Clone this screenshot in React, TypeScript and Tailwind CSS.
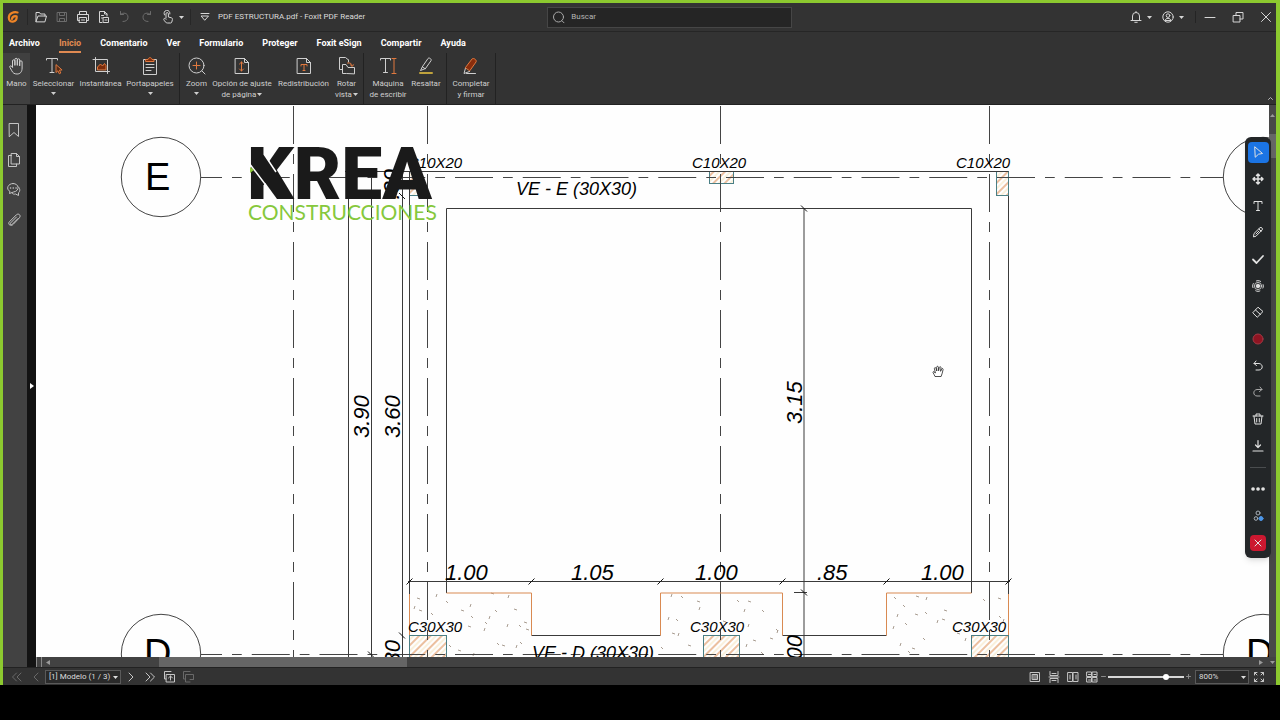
import { useState, type ReactNode } from "react";

const TABS = ["Archivo", "Inicio", "Comentario", "Ver", "Formulario", "Proteger", "Foxit eSign", "Compartir", "Ayuda"];

function Icon({ size, className, children }: { size: number; className?: string; children: ReactNode }) {
  return (
    <svg
      width={size}
      height={size}
      viewBox={`0 0 ${size} ${size}`}
      fill="none"
      stroke="currentColor"
      strokeLinecap="round"
      strokeLinejoin="round"
      className={`shrink-0 ${className ?? ""}`}
      aria-hidden="true"
    >
      {children}
    </svg>
  );
}

function Caret({ className }: { className?: string }) {
  return (
    <svg width="5" height="3" viewBox="0 0 5 3" fill="currentColor" className={`shrink-0 ${className ?? ""}`} aria-hidden="true">
      <path d="M0 0h5L2.5 3z" />
    </svg>
  );
}

/* ── Title bar ─────────────────────────────────────────────────── */
function TitleButton({ label, dim, width = "w-[21px]", children }: { label: string; dim?: boolean; width?: string; children: ReactNode }) {
  return (
    <button type="button" aria-label={label} className={`${width} h-5 flex items-center justify-center gap-1 ${dim ? "text-[#6c6c6c]" : "text-[#d6d6d6]"}`}>
      {children}
    </button>
  );
}

function TitleBar() {
  return (
    <header className="h-[29px] shrink-0 flex items-center bg-[#333333] border-b border-[#262626]">
      <div className="flex-[9] min-w-0 flex items-center">
        <Icon size={12} className="ml-1 text-[#ee8426]">
          <path d="M10.500 1.500C7 .600 1.800 2 1.800 6.800c0 2.700 2 4 4.200 3.800C8.800 10.400 10 8 9.600 5.300c-1.800-.3-4.200.2-4.600 2.500" strokeWidth="2.200" />
        </Icon>
        <div className="w-px h-4 bg-[#272727] ml-[8px] mr-[2px]" />
        <TitleButton label="Abrir">
          <Icon size={14}>
            <path d="M2 11.500V2.500h3.500l1 1.500H11v2M2 11.500L4 6h8.500L11 11.500z" />
          </Icon>
        </TitleButton>
        <TitleButton label="Guardar" dim>
          <Icon size={14}>
            <path d="M2.500 2.500h9v9h-9zM4.500 2.500v3h5v-3M4.500 11.500v-3h5v3" />
          </Icon>
        </TitleButton>
        <TitleButton label="Imprimir">
          <Icon size={14}>
            <path d="M3.500 4.500v-3h7v3M3.500 10.500h-2v-6h11v6h-2M3.500 7.500h7v5h-7zM5.500 10h3" />
          </Icon>
        </TitleButton>
        <TitleButton label="Exportar">
          <Icon size={14}>
            <path d="M5 12.500H2.500v-11h5L10 4v2M7.500 1.500V4H10M4.500 5.500h2M4.500 8h1M6.500 7.500h5v5h-5zM8 10h2" />
          </Icon>
        </TitleButton>
        <TitleButton label="Deshacer" dim>
          <Icon size={14}>
            <path d="M2.500 1.500v3h3M2.500 4.500C5 2 10 2.800 10 7.200 10 10 8 11.500 5 11.500" />
          </Icon>
        </TitleButton>
        <TitleButton label="Rehacer" dim>
          <Icon size={14}>
            <path d="M11.500 1.500v3h-3M11.500 4.500C9 2 4 2.800 4 7.200c0 2.800 2 4.300 5 4.300" />
          </Icon>
        </TitleButton>
        <TitleButton label="Modo táctil" width="w-[32px]">
          <Icon size={14}>
            <path d="M5 8V3.800a1.200 1.200 0 0 1 2.400 0V7l3 .8c1 .3 1.200 1 1 1.800l-.6 2.400c-.2.600-.6 1-1.200 1H6.500c-1.800 0-3-2-3.700-3.400-.4-1 .8-1.600 1.600-.9l.6.6M3.500 5a3 3 0 1 1 5.400-1" />
          </Icon>
          <Caret />
        </TitleButton>
        <div className="w-px h-4 bg-[#272727] ml-[2px] mr-[3px]" />
        <TitleButton label="Personalizar barra">
          <Icon size={14}>
            <path d="M3 3.500h8M3.500 6h7L7 10z" />
          </Icon>
        </TitleButton>
        <h1 className="ml-[3px] text-[8px] text-[#dcdcdc] whitespace-nowrap">PDF ESTRUCTURA.pdf - Foxit PDF Reader</h1>
      </div>
      <div className="w-[245px] h-[21px] flex items-center gap-[6px] px-1 bg-[#252525] border border-[#464646] text-[#a8a8a8]">
        <Icon size={13}>
          <circle cx="6.500" cy="6" r="5" />
          <path d="M10 9.800l2 2" />
        </Icon>
        <input type="search" aria-label="Buscar" placeholder="Buscar" className="flex-1 min-w-0 bg-transparent text-[8px] outline-none placeholder:text-[#b4b4b4]" />
      </div>
      <div className="flex-[8] flex items-center justify-end">
        <TitleButton label="Notificaciones" width="w-[32px]">
          <Icon size={14}>
            <path d="M2 10.500h10M3.500 10.500V6a3.500 3.500 0 0 1 7 0v4.500M5.800 12.300h2.400M7 1.500v1" />
          </Icon>
          <Caret />
        </TitleButton>
        <TitleButton label="Cuenta" width="w-[32px]">
          <Icon size={14}>
            <circle cx="7" cy="7" r="5.200" />
            <circle cx="7" cy="5.600" r="1.800" />
            <path d="M4 10.500c.3-3 5.700-3 6 0M4.500 10.500h5" />
          </Icon>
          <Caret />
        </TitleButton>
        <div className="w-px h-3 bg-[#242424] ml-[7px] mr-1" />
        <TitleButton label="Minimizar" width="w-5">
          <Icon size={12}>
            <path d="M1 6.500h10" />
          </Icon>
        </TitleButton>
        <TitleButton label="Restaurar" width="w-9">
          <Icon size={12}>
            <path d="M1.500 4.500h6.500v6.500h-6.500zM4 4.500v-3h7V8H8" />
          </Icon>
        </TitleButton>
        <TitleButton label="Cerrar" width="w-5">
          <Icon size={12}>
            <path d="M1.500 1.500l9 9M10.500 1.500l-9 9" />
          </Icon>
        </TitleButton>
      </div>
    </header>
  );
}

/* ── Ribbon ────────────────────────────────────────────────────── */
const ORANGE = "#e0793f";

function Tool({ lines, width, caret, active, children }: { lines: string[]; width: string; caret?: boolean; active?: boolean; children: ReactNode }) {
  return (
    <button type="button" className={`${width} h-full shrink-0 flex flex-col items-center pt-[3px] text-[#cfcfcf] text-[8px] leading-[11px] whitespace-nowrap ${active ? "bg-[#404040]" : ""}`}>
      <Icon size={20} className="mb-[2px]">{children}</Icon>
      {lines.map((line, i) => (
        <span key={line} className="flex items-center gap-px">
          {line}
          {caret && i > 0 && <Caret />}
        </span>
      ))}
      {caret && lines.length === 1 && <Caret className="mt-[3px]" />}
    </button>
  );
}

function ToolDivider() {
  return <div className="w-px h-full shrink-0 bg-[#222222] mx-[3px]" />;
}

function Ribbon() {
  return (
    <div className="h-[51px] shrink-0 flex bg-[#333333]">
      <Tool lines={["Mano"]} width="w-[27px]" active>
        <path d="M5.500 11V5a1.200 1.200 0 0 1 2.400 0v4M7.900 9V3.500a1.200 1.200 0 0 1 2.400 0V9M10.300 9V4a1.200 1.200 0 0 1 2.400 0v5.500M12.700 9.500V6a1.200 1.200 0 0 1 2.400 0v6c0 4-2 6-5 6-2.800 0-4.200-1-5.300-3.200L2.900 11.400c-.7-1.300.8-2 1.600-1.200l1 1.200" />
      </Tool>
      <Tool lines={["Seleccionar"]} width="w-[47px]" caret>
        <path d="M2.500 4V2.500h11V4M8 2.500v14M6 16.500h4" />
        <path d="M12 9v7.500l1.900-1.700 1.400 3 1.500-.8-1.400-2.800 2.300-.2z" stroke={ORANGE} fill="#5a2c14" />
      </Tool>
      <Tool lines={["Instantánea"]} width="w-[47px]">
        <path d="M4.500 1.500v14h14M2 3.500h14.500v14" />
        <path d="M6.500 13.500V11l3-3 2 2 2-2.500 1.500 2v4z" stroke={ORANGE} fill="#7c2d0c" />
      </Tool>
      <Tool lines={["Portapapeles"]} width="w-[52px]" caret>
        <path d="M6 3.500H3.500v15h13v-15H14M6 8.500h8M6 11.500h8M6 14.500h5" />
        <path d="M6 3.500h2c.5-2.500 3.500-2.500 4 0h2v2H6z" stroke={ORANGE} fill="#7c2d0c" />
      </Tool>
      <ToolDivider />
      <Tool lines={["Zoom"]} width="w-[27px]" caret>
        <circle cx="9.500" cy="9.500" r="7.500" />
        <path d="M15 15l3 3" />
        <path d="M9.500 6v7M6 9.500h7" stroke={ORANGE} />
      </Tool>
      <Tool lines={["Opción de ajuste", "de página"]} width="w-[64px]" caret>
        <path d="M3.500 2.500h9l4 4v11h-13zM12.500 2.500v4h4" />
        <path d="M9.500 6v9M7.500 8l2-2 2 2M7.500 13l2 2 2-2" stroke={ORANGE} />
      </Tool>
      <Tool lines={["Redistribución"]} width="w-[59px]">
        <path d="M3.500 2.500h9l4 4v11h-13zM12.500 2.500v4h4" />
        <path d="M7 10V8.500h6V10M10 8.500v6M9 14.500h2" stroke={ORANGE} />
      </Tool>
      <Tool lines={["Rotar", "vista"]} width="w-[27px]" caret>
        <path d="M5.500 13.500h-3v-12h6l3 2.500M9 17.500H5.500v-9H9l2 3h6.500v6zM11.500 4v2" />
        <path d="M10.500 7c3-.5 4.500.5 4.500 3M13.300 8.700L15 10.300l1.800-1.600" stroke={ORANGE} />
      </Tool>
      <ToolDivider />
      <Tool lines={["Máquina", "de escribir"]} width="w-[42px]">
        <path d="M2.500 4V2.500h10V4M7.500 2.500v14M5.500 16.500h4" />
        <path d="M14 2.500h4M16 2.500v15M14 17.500h4" stroke={ORANGE} />
      </Tool>
      <Tool lines={["Resaltar"]} width="w-[34px]">
        <path d="M6.500 10.500l5.500-8c1-1.300 4 .5 3 2.200l-5.500 7.800zM6.500 10.500L4.500 14.500l5-2" />
        <path d="M4 17h12" stroke="#bfa23c" strokeWidth="2" />
      </Tool>
      <ToolDivider />
      <Tool lines={["Completar", "y firmar"]} width="w-[42px]">
        <path d="M4.500 12L3 17.500l5.500-2M5.500 17.500h9" />
        <path d="M4.500 11.500L11 3c1.500-1.600 5.300 1.200 4 3L9 14.500z" stroke={ORANGE} fill="#8a2d0c" />
      </Tool>
      <ToolDivider />
      <button type="button" aria-label="Contraer cinta" className="ml-auto self-end mb-[2px] w-[9px] h-[8px] text-[#b5b5b5]">
        <Icon size={7}>
          <path d="M1.500 4.500l2-2 2 2" />
        </Icon>
      </button>
    </div>
  );
}

/* ── Side panel ────────────────────────────────────────────────── */
function SideBar() {
  return (
    <nav className="w-6 shrink-0 bg-[#424242] flex flex-col items-center gap-[14px] pt-[17px] pr-[2px] text-[#c4c4c4]">
      <button type="button" aria-label="Marcadores">
        <Icon size={16}>
          <path d="M3.500 1.500h9v13L8 10.500l-4.500 4z" />
        </Icon>
      </button>
      <button type="button" aria-label="Páginas">
        <Icon size={16}>
          <path d="M5.500 1.500h5l3 3v7.500h-8zM10.500 1.500v3h3M5.500 3.500h-3v11h8V12" />
        </Icon>
      </button>
      <button type="button" aria-label="Comentarios">
        <Icon size={16}>
          <path d="M7 1.500c6.500 0 7 7.500.5 8.500L3.500 11.500 4 9.500C-.5 7 2 1.500 7 1.500zM12.500 5c2 2 1.500 4.500 0 5.800v2.700l-3-1.500C8 12.500 6.500 12 6 11" />
          <path d="M4.500 6h.1M7.200 6h.1M10 6h.1" strokeWidth="1.500" />
        </Icon>
      </button>
      <button type="button" aria-label="Adjuntos">
        <Icon size={16}>
          <path d="M12 6.500l-6 6c-2 1.800-4.500-.6-2.600-2.700l7-7c2.300-2 5 .8 3 3L7 12.500c-1.300 1.500-3.500.5-2.500-1.500l6-6" />
        </Icon>
      </button>
    </nav>
  );
}

/* ── Structural plan ───────────────────────────────────────────── */
const AXES_X = [293.5, 427.5, 720.5, 989.5];
const AXES_Y = [177.5, 654.5];

const COLUMNS = [
  [409.5, 171.5, 12, 24],
  [709.5, 171.5, 24, 12],
  [996.5, 171.5, 12, 24],
  [409.5, 635.5, 37, 37],
  [703.5, 635.5, 36, 37],
  [971.5, 635.5, 37, 37],
];

const TICKS = [409.5, 531.5, 660.5, 782.5, 886.5, 1008.5];

const SPECKS = [
  [417, 598], [436, 597], [446, 601], [419, 610], [414, 609], [431, 613], [461, 610], [470, 607], [471, 616],
  [491, 593], [508, 598], [495, 610], [514, 609], [489, 619], [485, 622], [468, 626], [507, 627], [519, 625],
  [524, 622], [484, 631], [449, 645], [458, 650], [473, 656], [497, 643], [502, 645], [516, 648], [520, 642],
  [526, 629], [671, 597], [681, 596], [697, 601], [699, 610], [737, 600], [748, 601], [744, 612], [762, 610],
  [723, 621], [668, 620], [676, 619], [672, 633], [678, 636], [661, 647], [688, 645], [748, 627], [776, 629],
  [753, 640], [746, 647], [761, 652], [770, 638], [777, 633], [894, 597], [916, 596], [926, 600], [903, 605],
  [915, 614], [897, 617], [925, 612], [944, 610], [893, 629], [905, 623], [942, 619], [937, 623], [923, 638],
  [912, 648], [900, 646], [908, 651], [957, 633], [965, 641], [983, 599], [998, 598], [1003, 622], [999, 616],
];

function PlanDrawing() {
  return (
    <svg
      viewBox="36 105 1233 552"
      preserveAspectRatio="xMinYMin slice"
      className="absolute inset-0 w-full h-full font-['Liberation_Sans',sans-serif]"
      role="img"
      aria-label="Plano estructural"
    >
      <defs>
        <pattern id="hatch" width="8" height="8" patternUnits="userSpaceOnUse" patternTransform="rotate(45)">
          <path d="M2 0v8" stroke="#d9813f" strokeWidth="1" />
          <path d="M6 0v8" stroke="#f6e2b8" strokeWidth="1" />
        </pattern>
      </defs>

      {/* concrete speckles */}
      <g stroke="#a89c90" strokeWidth="1">
        {SPECKS.map(([x, y], i) => (
          <path key={i} d={i % 3 === 0 ? `M${x} ${y}l3 1` : i % 3 === 1 ? `M${x} ${y}l1-3` : `M${x} ${y}l2 2`} />
        ))}
      </g>

      {COLUMNS.map(([x, y, w, h]) => (
        <rect key={`${x}-${y}`} x={x} y={y} width={w} height={h} fill="url(#hatch)" stroke="#4a7f85" />
      ))}

      {/* axes */}
      <g stroke="#444444" fill="none">
        {AXES_X.map((x) => (
          <path key={x} d={`M${x} 106V657`} strokeDasharray="38 10 10 10" />
        ))}
        {AXES_Y.map((y) => (
          <path key={y} d={`M201 ${y}H1223`} strokeDasharray="38 10 9.750 10" strokeDashoffset="17" />
        ))}
        <circle cx="161" cy="177" r="39.700" />
        <circle cx="1263" cy="177" r="39.700" />
        <circle cx="161" cy="654" r="39.700" />
        <circle cx="1263" cy="654" r="39.700" />
      </g>
      <g fontSize="38">
        <text x="145" y="190">E</text>
        <text x="144" y="666">D</text>
        <text x="1246" y="666">D</text>
      </g>

      {/* walls and dimension lines */}
      <g stroke="#3a3a3a" fill="none">
        <path d="M345 171.500H1008.500M409.500 172V594M1008.500 196V594" />
        <path d="M446.500 593V208.500H971.500V593" />
        <path d="M348.500 172V657M371.500 178V657M402.500 172V657" />
        <path d="M804 208V657M794 592.500H807" />
        <path d="M408 581.500H1010" />
        <path d="M531.500 635.500H660.500M782.500 635.500H886.500" />
        {TICKS.map((x) => (
          <path key={x} d={`M${x - 3} 584.500l6-6`} stroke="#111111" />
        ))}
        <path d="M801 205.500l6 6M801 589.500l6 6M399 632.500l6 6M368 651.500l6 6M399 193l6 6" stroke="#111111" />
      </g>
      <g stroke="#d98a52" fill="none">
        <path d="M446.500 593H531.500V635.500M660.500 635.500V593H782.500V635.500M886.500 635.500V593H971.500" />
        <path d="M409.500 594V635M1008.500 594V635" />
      </g>

      {/* lettering */}
      <g fontStyle="italic" fontSize="15">
        <text x="408" y="168">C10X20</text>
        <text x="692" y="168">C10X20</text>
        <text x="956" y="168">C10X20</text>
        <text x="408" y="632">C30X30</text>
        <text x="690" y="632">C30X30</text>
        <text x="952" y="632">C30X30</text>
      </g>
      <g fontStyle="italic" fontSize="18">
        <text x="516" y="195">VE - E (30X30)</text>
        <text x="532" y="659">VE - D (30X30)</text>
      </g>
      <g fontStyle="italic" fontSize="22">
        <text x="445" y="580">1.00</text>
        <text x="571" y="580">1.05</text>
        <text x="695" y="580">1.00</text>
        <text x="817" y="580">.85</text>
        <text x="921" y="580">1.00</text>
        <text transform="translate(369 438) rotate(-90)">3.90</text>
        <text transform="translate(400 438) rotate(-90)">3.60</text>
        <text transform="translate(802 424) rotate(-90)">3.15</text>
        <text transform="translate(399 169) rotate(-90)" textAnchor="end">.30</text>
        <text transform="translate(400 640) rotate(-90)" textAnchor="end">.30</text>
        <text transform="translate(802 635) rotate(-90)" textAnchor="end">1.00</text>
      </g>

      {/* company logo: a slanted band crosses the initial */}
      <g>
        <text x="247" y="199" fontSize="73" fontWeight="900" fill="#1a1a1a" className="font-['Roboto',sans-serif]">KREA</text>
        <path d="M251 163l13-9 29 45h-16z" fill="#1a1a1a" />
        <path d="M264 154l12 18M249 163l16 21v16" stroke="#ffffff" strokeWidth="1.500" fill="none" />
        <path d="M250 167l4 3-4 3z" fill="#8fcb3a" />
        <text x="248" y="220" fontSize="21" fill="#86c83c" className="font-['Lato',sans-serif]">CONSTRUCCIONES</text>
      </g>

      {/* grab cursor */}
      <path
        d="M935 376.500c-.3-1.500-1.500-2.600-2-4-.3-1 1-1.200 1.600-.4l.8 1-1-4.600c0-1.200 1.500-1.200 1.700 0l.7 2.500-.2-3.800c.2-1.200 1.700-1.200 1.800 0l.2 3.600.7-3.400c.4-1.100 1.800-.8 1.700.3l-.4 3.600 1-2.300c.5-1 1.600-.5 1.500.5-.3 2.800-1.300 4.500-2 7z"
        fill="#ffffff"
        stroke="#222222"
        strokeWidth=".8"
      />
    </svg>
  );
}

/* ── Floating annotation palette ───────────────────────────────── */
const PALETTE: { label: string; art: ReactNode; dim?: boolean }[] = [
  { label: "Mover lienzo", art: <path d="M7 2v10M2 7h10M5.500 3.500L7 2l1.500 1.500M5.500 10.500L7 12l1.500-1.500M3.500 5.500L2 7l1.500 1.500M10.500 5.500L12 7l-1.500 1.500" strokeWidth="1.500" /> },
  { label: "Texto", art: <path d="M3 4.500v-2h8v2M7 2.500v9M5.500 11.500h3" /> },
  { label: "Lápiz", art: <path d="M2.500 11.500l.5-3L9 2.700c1.200-1 3.300.9 2.200 2.200L5.200 11zM8 4l2.200 2.200M5 9l3-3" /> },
  { label: "Marca", art: <path d="M2 7.500l3.500 3.500L12 4" strokeWidth="1.800" /> },
  {
    label: "Foco",
    art: (
      <>
        <circle cx="7" cy="7" r="1.800" fill="currentColor" />
        <circle cx="7" cy="7" r="3.600" strokeWidth=".8" />
        <circle cx="7" cy="7" r="5.300" strokeDasharray="5 3.300" strokeDashoffset="2.500" strokeLinecap="butt" />
      </>
    ),
  },
  { label: "Borrador", art: <path d="M2 7.500l5-5.300 5 4.300-5.500 5.500zM4.500 5l5 4.500" /> },
  { label: "Color", art: <circle cx="7" cy="7" r="5" fill="#8e1422" stroke="#a33a45" /> },
  { label: "Deshacer trazo", art: <path d="M5 2L3 4.500 5.500 6.500M3 4.500h5c4.500.500 4 6.500 0 6.500H5" /> },
  { label: "Rehacer trazo", art: <path d="M9 2l2 2.500L8.500 6.500M11 4.500H6c-4.500.500-4 6.500 0 6.500h3" />, dim: true },
  { label: "Eliminar", art: <path d="M2 4h10M5 4V2h4v2M3 4l1 8h6l1-8M5.700 6.500v3.500M8.300 6.500v3.500" /> },
  { label: "Descargar", art: <path d="M7 1.500V8M4.500 6L7 8.500 9.500 6M2 12h10" strokeWidth="1.200" /> },
];

function Palette() {
  return (
    <div className="absolute top-8 -right-[2px] w-[26px] py-[2px] rounded-md bg-[#232628] text-[#e2e2e2] shadow-md">
      <div className="h-[320px] grid grid-rows-12 justify-items-center items-center">
        <button type="button" aria-label="Puntero" className="w-[21px] h-[21px] rounded bg-[#1b74e4] flex items-center justify-center">
          <Icon size={14}>
            <path d="M4 2l7.500 6.500-4 .7L4.500 12z" />
          </Icon>
        </button>
        {PALETTE.map((item) => (
          <button key={item.label} type="button" aria-label={item.label} className={item.dim ? "text-[#a8a8a8]" : ""}>
            <Icon size={14}>{item.art}</Icon>
          </button>
        ))}
      </div>
      <div className="h-px mx-[5px] my-2 bg-[#4a4d4f]" />
      <div className="h-[80px] grid grid-rows-3 justify-items-center items-center">
        <button type="button" aria-label="Más">
          <Icon size={14}>
            <path d="M2 7h.1M7 7h.1M12 7h.1" strokeWidth="3.600" />
          </Icon>
        </button>
        <button type="button" aria-label="Compartir pantalla">
          <Icon size={14} className="text-[#a8b0b8]">
            <circle cx="7" cy="4" r="2" />
            <circle cx="5" cy="9.500" r="1.800" />
            <circle cx="10" cy="9.500" r="2" fill="#4c96e8" stroke="#4c96e8" />
          </Icon>
        </button>
        <button type="button" aria-label="Cerrar paleta" className="w-4 h-4 rounded-sm bg-[#cc1830] flex items-center justify-center">
          <Icon size={10}>
            <path d="M2 2l6 6M8 2L2 8" />
          </Icon>
        </button>
      </div>
    </div>
  );
}

/* ── Status bar ────────────────────────────────────────────────── */
function NavButton({ label, d, dim }: { label: string; d: string; dim?: boolean }) {
  return (
    <button type="button" aria-label={label} className={`w-[19px] flex justify-center ${dim ? "text-[#696969]" : "text-[#c6c6c6]"}`}>
      <Icon size={12}>
        <path d={d} />
      </Icon>
    </button>
  );
}

function StatusSelect({ label, value, width }: { label: string; value: string; width: string }) {
  return (
    <div className={`relative ${width} h-[14px]`}>
      <select aria-label={label} className="block appearance-none w-full h-full pl-[3px] border border-[#5a5a5a] bg-[#2a2a2a] text-[8px] leading-3 text-[#dddddd]">
        <option>{value}</option>
      </select>
      <Caret className="absolute right-[3px] top-[6px] text-[#dddddd] pointer-events-none" />
    </div>
  );
}

function StatusBar() {
  const [zoom, setZoom] = useState(78);

  return (
    <footer className="h-[18px] shrink-0 flex items-center bg-[#333333] border-t border-[#222222]">
      <div className="flex items-center pl-1">
        <NavButton label="Primera página" d="M5.500 2l-4 4 4 4M10 2L6 6l4 4" dim />
        <NavButton label="Página anterior" d="M8 2L4 6l4 4" dim />
        <StatusSelect label="Página" value="[1] Modelo (1 / 3)" width="w-[76px]" />
        <NavButton label="Página siguiente" d="M4 2l4 4-4 4" />
        <NavButton label="Última página" d="M2 2l4 4-4 4M6.500 2l4 4-4 4" />
        <NavButton label="Vista anterior" d="M8 .500H1.500V8H3M3.500 3.500h8v7.500h-8zM7.500 5v4M5.500 7L7.500 5l2 2" />
        <NavButton label="Vista siguiente" d="M8 .500H1.500V8H3M8 11H3.500V3.500h8V8M8 8.500h3.500" dim />
      </div>
      <div className="ml-auto flex items-center text-[#c6c6c6]">
        <NavButton label="Una página" d="M1.500 1.500h9v9h-9zM3.500 3.500h5v5h-5zM4 5h4M4 7h4" />
        <NavButton label="Continua" d="M2 .500v4h8v-4M2 11.500v-4h8v4M1 6h10M4 2.500h4M4 9.500h4" />
        <NavButton label="Páginas enfrentadas" d="M1 1.500h4.500v9H1zM6.500 1.500H11v9H6.500zM3 4v4M9 4v4" />
        <NavButton label="Enfrentadas continua" d="M1 1h4.500v4.500H1zM6.500 1H11v4.500H6.500zM1 6.500h4.500V11H1zM6.500 6.500H11V11H6.500zM2.500 3.500h2M8 3.500h2M2.500 9h2M8 9h2" />
        <Icon size={5}>
          <path d="M.500 2.500h4" stroke="#8a8a8a" />
        </Icon>
        <input
          type="range"
          aria-label="Nivel de zoom"
          value={zoom}
          onChange={(e) => setZoom(Number(e.target.value))}
          className="appearance-none w-[76px] h-[2px] mx-[2px] bg-[#d8d8d8] [&::-webkit-slider-thumb]:appearance-none [&::-webkit-slider-thumb]:w-[6px] [&::-webkit-slider-thumb]:h-[6px] [&::-webkit-slider-thumb]:rounded-full [&::-webkit-slider-thumb]:bg-white"
        />
        <Icon size={5} className="mr-1">
          <path d="M.500 2.500h4M2.500.500v4" stroke="#8a8a8a" />
        </Icon>
        <StatusSelect label="Zoom" value="800%" width="w-[54px]" />
        <div className="mr-2">
          <NavButton label="Pantalla completa" d="M1.500 4V1.500H4M1.500 1.500l2.500 2.500M8 1.500h2.500V4M10.500 1.500L8 4M1.500 8v2.500H4M1.500 10.500L4 8M10.500 8v2.500H8M10.500 10.500L8 8" />
        </div>
      </div>
    </footer>
  );
}

export default function App() {
  const [tab, setTab] = useState("Inicio");

  return (
    <div className="h-screen flex flex-col bg-black pb-[35px] font-['Roboto','Open_Sans',sans-serif]">
      <div className="flex-1 min-h-0 flex flex-col border-t-[3px] border-l-[3px] border-r-4 border-[#8cc92f] overflow-hidden">
        <TitleBar />

        <div role="tablist" className="h-[21px] shrink-0 flex items-center gap-[19px] pt-[2px] pl-[6px] bg-[#333333] text-[9px] leading-4 font-bold">
          {TABS.map((name) => (
            <button
              key={name}
              type="button"
              role="tab"
              aria-selected={tab === name}
              onClick={() => setTab(name)}
              className={`whitespace-nowrap border-b-2 ${tab === name ? "text-[#e08a52] border-[#e08a52]" : "text-white border-transparent"}`}
            >
              {name}
            </button>
          ))}
        </div>
        <Ribbon />
        <div className="h-px shrink-0 bg-[#222222]" />

        <div className="flex-1 min-h-0 flex">
          <SideBar />
          <button type="button" aria-label="Mostrar panel" className="w-[9px] shrink-0 bg-[#131313] text-white flex items-center justify-center">
            <svg width="4" height="6" viewBox="0 0 4 6" fill="currentColor" aria-hidden="true">
              <path d="M0 0l4 3-4 3z" />
            </svg>
          </button>
          <div className="flex-1 min-w-0 flex flex-col">
            <div className="flex-1 min-h-0 flex">
              <main className="relative flex-1 min-w-0 bg-[#fefefe]">
                <PlanDrawing />
                <Palette />
              </main>
              <div className="w-[7px] shrink-0 bg-[#484848] flex flex-col items-center text-[#9a9a9a]">
                <svg width="5" height="3" viewBox="0 0 5 3" fill="currentColor" className="mt-[9px]" aria-hidden="true">
                  <path d="M0 3h5L2.500 0z" />
                </svg>
                <div className="w-full h-6 mt-[17px] bg-[#666666]" />
              </div>
            </div>
            <div className="h-[10px] shrink-0 flex items-center pr-px bg-[#424242] text-[#9a9a9a]">
              <div className="w-[6px] h-full border-x border-[#8a8a8a]" />
              <svg width="4" height="5" viewBox="0 0 4 5" fill="currentColor" className="ml-1" aria-hidden="true">
                <path d="M4 0v5L0 2.500z" />
              </svg>
              <div className="w-[20%] h-full ml-[109px] bg-[#656565]" />
              <svg width="4" height="5" viewBox="0 0 4 5" fill="currentColor" className="ml-auto" aria-hidden="true">
                <path d="M0 0v5l4-2.500z" />
              </svg>
              <Caret className="ml-[7px]" />
            </div>
          </div>
        </div>
        <StatusBar />
      </div>
    </div>
  );
}
